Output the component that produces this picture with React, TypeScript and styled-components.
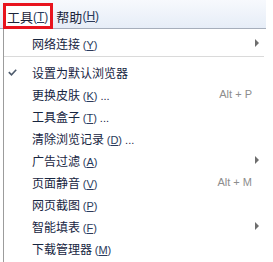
import styled, { createGlobalStyle } from "styled-components";

const GlobalStyle = createGlobalStyle`
  html, body {
    margin: 0;
    padding: 0;
    background: #ffffff;
  }
  body {
    font-family: "Noto Sans CJK SC", "Liberation Sans", sans-serif;
  }
`;

type Item = {
  label: string;
  key: string;
  dots?: boolean;
  shortcut?: string;
  submenu?: boolean;
  checked?: boolean;
};

const items: Item[] = [
  { label: "设置为默认浏览器", key: "", checked: true },
  { label: "更换皮肤", key: "K", dots: true, shortcut: "Alt + P" },
  { label: "工具盒子", key: "T", dots: true },
  { label: "清除浏览记录", key: "D", dots: true },
  { label: "广告过滤", key: "A", submenu: true },
  { label: "页面静音", key: "V", shortcut: "Alt + M" },
  { label: "网页截图", key: "P" },
  { label: "智能填表", key: "F", submenu: true },
  { label: "下载管理器", key: "M" },
];

export default function App() {
  return (
    <Page>
      <GlobalStyle />
      <MenuBar>
        <TopItem $active>
          工具<BarKey>(<u>T</u>)</BarKey>
        </TopItem>
        <TopItem>
          帮助<BarKey>(<u>H</u>)</BarKey>
        </TopItem>
      </MenuBar>
      <Dropdown>
        <Row>
          <CheckCell />
          <Label>
            网络连接 <Key>(<u>Y</u>)</Key>
          </Label>
          <Arrow />
        </Row>
        <Separator />
        {items.map((it) => (
          <Row key={it.label}>
            <CheckCell>
              {it.checked && (
                <svg width="9" height="7" viewBox="0 0 9 7">
                  <path
                    d="M0.8 3.2 L3.5 5.8 L8.2 0.8"
                    fill="none"
                    stroke="#4d5a6c"
                    strokeWidth="1.6"
                  />
                </svg>
              )}
            </CheckCell>
            <Label>
              {it.label}
              {it.key && (
                <>
                  {" "}
                  <Key>
                    (<u>{it.key}</u>)
                  </Key>
                </>
              )}
              {it.dots && <Dots> ...</Dots>}
            </Label>
            {it.shortcut && <Shortcut>{it.shortcut}</Shortcut>}
            {it.submenu && <Arrow />}
          </Row>
        ))}
      </Dropdown>
    </Page>
  );
}

const Page = styled.div`
  width: 273px;
  height: 262px;
  overflow: hidden;
  background: #ffffff;
`;

const MenuBar = styled.div`
  width: 266px;
  height: 29px;
  display: flex;
  align-items: flex-end;
  padding-left: 3px;
  box-sizing: border-box;
  background: linear-gradient(#f7f9fd, #e6edf7);
  border-bottom: 1px solid #a6aebb;
  color: #1a2338;
  font-size: 13px;
`;

const TopItem = styled.div<{ $active?: boolean }>`
  height: 26px;
  margin-bottom: -1px;
  box-sizing: border-box;
  display: flex;
  align-items: center;
  white-space: nowrap;
  padding: ${(p) => (p.$active ? "1px 2px 0 1px" : "0")};
  margin-right: ${(p) => (p.$active ? "3px" : "0")};
  border: ${(p) => (p.$active ? "3px solid #e8141e" : "none")};
  background: ${(p) => (p.$active ? "#ffffff" : "transparent")};
`;

const BarKey = styled.span`
  font-family: "Liberation Sans", sans-serif;
  font-size: 12px;
  color: #2a3a5c;
  u {
    text-underline-offset: 1px;
  }
`;

const Dropdown = styled.div`
  margin-left: 3px;
  width: 263px;
  height: 233px;
  box-sizing: border-box;
  border-left: 1px solid #9c9c9c;
  padding-top: 3px;
  display: flex;
  flex-direction: column;
`;

const Row = styled.div`
  height: 22px;
  display: flex;
  align-items: center;
  font-size: 12px;
  color: #17253f;
`;

const CheckCell = styled.div`
  width: 28px;
  flex: none;
  display: flex;
  align-items: center;
  padding-left: 4px;
  box-sizing: border-box;
`;

const Label = styled.span`
  flex: 1;
  white-space: nowrap;
`;

const Key = styled.span`
  font-family: "Liberation Sans", sans-serif;
  font-size: 11px;
  color: #2a3a5c;
  u {
    text-underline-offset: 1px;
  }
`;

const Dots = styled.span`
  font-family: "Liberation Sans", sans-serif;
  font-size: 11px;
`;

const Shortcut = styled.span`
  font-family: "Liberation Sans", sans-serif;
  font-size: 11px;
  color: #8d8d8d;
  margin-right: 14px;
`;

const Arrow = styled.span`
  width: 0;
  height: 0;
  border-top: 4px solid transparent;
  border-bottom: 4px solid transparent;
  border-left: 4px solid #6e6e6e;
  margin-right: 7px;
`;

const Separator = styled.div`
  height: 1px;
  background: #dadada;
  margin: 2px 2px 4px 0;
`;
